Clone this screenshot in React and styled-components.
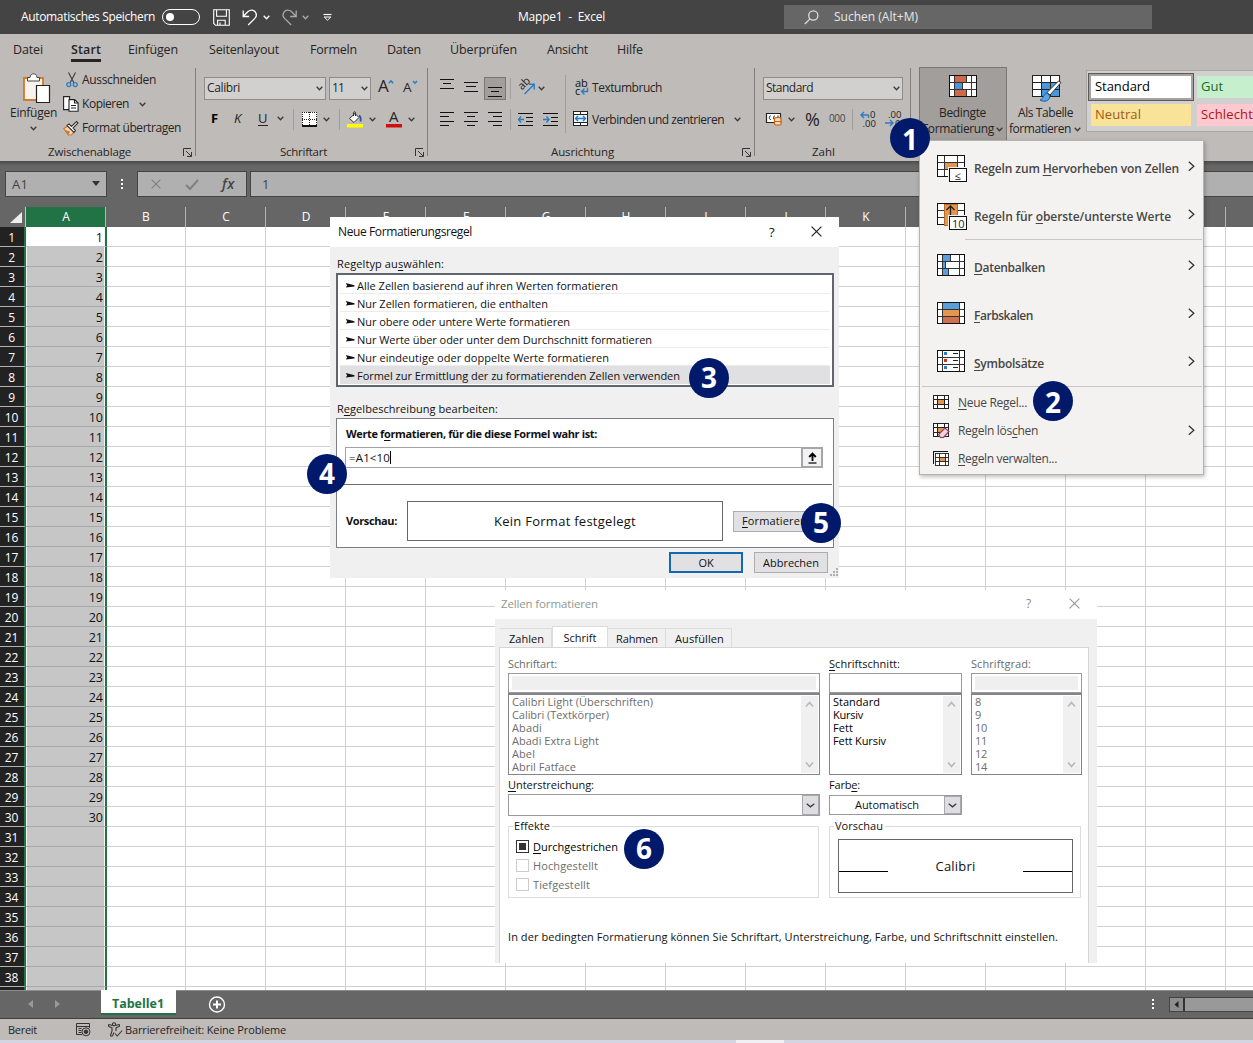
import React, { useLayoutEffect, useRef } from "react";
import styled, { createGlobalStyle } from "styled-components";

const GlobalStyle = createGlobalStyle`
  html, body { margin: 0; padding: 0; overflow: hidden; }
  * { box-sizing: border-box; }
  body { font-family: "Open Sans", "Noto Sans", sans-serif; font-size: 12px; color: #262524; }
  svg { display: block; flex: none; overflow: visible; }
  u { text-decoration: underline; text-underline-offset: 2px; text-decoration-thickness: 1px; }
`;

/* ---------- text that is tracked to a given width ---------- */
const TextBox = styled.span`
  display: block;
  flex: none;
  width: ${(p) => p.$w}px;
  margin-left: ${(p) => p.$ml || 0}px;
  font-size: ${(p) => p.$size || 12}px;
  font-weight: ${(p) => p.$weight || 400};
  font-style: ${(p) => (p.$italic ? "italic" : "normal")};
  color: ${(p) => p.$color || "inherit"};
  line-height: 16px;
  white-space: pre;
`;
function T({ w, ml, size, weight, color, italic, children }) {
  const ref = useRef(null);
  useLayoutEffect(() => {
    const el = ref.current;
    el.style.letterSpacing = "0px";
    const natural = el.getBoundingClientRect().width;
    el.style.letterSpacing = (w - natural) / el.textContent.length + "px";
  }, [w]);
  return (
    <TextBox $w={w} $ml={ml} $size={size} $weight={weight} $color={color} $italic={italic}>
      <span ref={ref}>{children}</span>
    </TextBox>
  );
}

const Slot = styled.div`
  flex: none;
  display: flex;
  align-items: center;
  margin-left: ${(p) => p.$ml || 0}px;
  margin-top: ${(p) => p.$mt || 0}px;
  margin-bottom: ${(p) => p.$mb || 0}px;
  width: ${(p) => p.$w}px;
`;

/* ---------- window ---------- */
const Window = styled.div`
  position: relative;
  width: 1253px;
  height: 1043px;
  overflow: hidden;
  display: flex;
  flex-direction: column;
  background: #fff;
`;
const TitleBar = styled.div`
  flex: none;
  height: 34px;
  background: #444;
  color: #fff;
  display: flex;
  align-items: center;
`;
const Toggle = styled.div`
  margin-left: 7px;
  width: 38px;
  height: 16px;
  border: 1px solid #fff;
  border-radius: 8px;
  display: flex;
  align-items: center;
  padding-left: 3px;
  &::before { content: ""; width: 8px; height: 8px; border-radius: 50%; background: #fff; }
`;
const Search = styled.div`
  margin-left: 179px;
  width: 368px;
  height: 24px;
  background: #666;
  color: #e6e6e6;
  display: flex;
  align-items: center;
  padding-left: 20px;
`;
const Tabs = styled.nav`
  flex: none;
  height: 32px;
  background: #bfbbb8;
  display: flex;
  align-items: flex-start;
  padding-top: 8px;
`;
const Tab = styled.div`
  flex: none;
  margin-left: ${(p) => p.$ml}px;
  padding-bottom: 1px;
  border-bottom: 3px solid ${(p) => (p.$active ? "#262524" : "transparent")};
`;

/* ---------- ribbon ---------- */
const Ribbon = styled.div`
  flex: none;
  height: 95px;
  background: #bfbbb8;
  display: flex;
  overflow: hidden;
`;
const Group = styled.section`
  flex: none;
  width: ${(p) => p.$w}px;
  display: flex;
  flex-direction: column;
`;
const GroupBody = styled.div`
  flex: none;
  height: 71px;
  display: flex;
  padding-top: ${(p) => p.$pt ?? 9}px;
`;
const GroupLabel = styled.div`
  height: 24px;
  padding: 6px 3px 0 0;
  display: flex;
  align-items: center;
  justify-content: space-between;
`;
const GroupLine = styled.div`
  flex: none;
  width: 1px;
  height: 88px;
  margin-top: 2px;
  background: #807d7a;
`;
const Rows = styled.div`
  flex: none;
  width: ${(p) => (p.$w ? `${p.$w}px` : "auto")};
  display: flex;
  flex-direction: column;
`;
const Row = styled.div`
  flex: none;
  height: ${(p) => p.$h}px;
  display: flex;
  align-items: center;
`;
const VLine = styled.div`
  flex: none;
  width: 1px;
  height: ${(p) => p.$h || 21}px;
  margin-left: ${(p) => p.$ml || 0}px;
  background: #a19e9b;
`;
const Combo = styled.div`
  flex: none;
  margin-left: ${(p) => p.$ml}px;
  width: ${(p) => p.$w}px;
  height: 23px;
  border: 1px solid #8f8c8a;
  background: #d2d0ce;
  display: flex;
  align-items: center;
  justify-content: space-between;
  padding: 0 2px;
`;
const Pressed = styled.div`
  flex: none;
  margin-left: 6px;
  width: 22px;
  height: 23px;
  border: 1px solid #797673;
  background: #a19e9b;
  display: flex;
  align-items: center;
  justify-content: center;
  padding-top: 7px;
`;
const PasteButton = styled.div`
  width: 63px;
  padding-top: 5px;
  display: flex;
  flex-direction: column;
`;
const BigButton = styled.div`
  flex: none;
  width: ${(p) => p.$w}px;
  height: 74px;
  margin: 1px 0 0 ${(p) => p.$ml}px;
  border: 1px solid ${(p) => (p.$active ? "#797673" : "transparent")};
  background: ${(p) => (p.$active ? "#a19e9b" : "transparent")};
  display: flex;
  flex-direction: column;
  padding-top: 7px;
`;
const Gallery = styled.div`
  flex: none;
  margin: 4px 0 0 1px;
  width: 180px;
  height: 62px;
  border: 1px solid #a9a6a3;
  background: #d2d0ce;
  display: grid;
  grid-template-columns: 106px 100px;
  grid-template-rows: 28px 22px;
  column-gap: 3px;
  row-gap: 3px;
  padding: 2px 0 0 1px;
`;
const Swatch = styled.div`
  display: flex;
  align-items: center;
  padding: 0 0 2px 4px;
  color: ${(p) => p.$fg};
  background: ${(p) => p.$bg};
  margin: ${(p) => p.$m || "0"};
`;
const SwatchFrame = styled.div`
  border: 1px solid #5b5957;
  background: #a5a2a0;
  padding: 2px;
  display: flex;
  > div { flex: 1; }
`;

/* ---------- formula bar ---------- */
const FormulaBar = styled.div`
  flex: none;
  height: 46px;
  background: linear-gradient(#525252, #666 4px);
  border-top: 1px solid #4d4d4d;
  display: flex;
  align-items: flex-start;
  padding: 9px 0 0 5px;
`;
const FBox = styled.div`
  flex: ${(p) => (p.$w ? "none" : "1")};
  width: ${(p) => p.$w}px;
  height: 26px;
  margin-left: ${(p) => p.$ml || 0}px;
  border: 1px solid #444;
  border-right-width: ${(p) => (p.$w ? 1 : 0)}px;
  background: #b0b0b0;
  color: #444;
  display: flex;
  align-items: center;
`;
const Dots = styled.div`
  flex: none;
  margin: ${(p) => p.$m};
  display: flex;
  flex-direction: column;
  gap: 2px;
  &::before, &::after, > i { content: ""; display: block; width: 2px; height: 2px; background: #fff; }
`;

/* ---------- grid ---------- */
const HeaderRow = styled.div`
  flex: none;
  height: 20px;
  background: #666;
  display: flex;
`;
const Corner = styled.div`
  flex: none;
  width: 26px;
  border-right: 1px solid #c6c6c6;
  padding: 5px 0 0 10px;
`;
const ColHead = styled.div`
  flex: none;
  width: 80px;
  padding-left: 1px;
  border-right: 1px solid #b5b5b5;
  background: ${(p) => (p.$sel ? "#217346" : "transparent")};
  color: #fff;
  text-align: center;
  line-height: 19px;
  font-size: 12px;
`;
const Sheet = styled.div`
  flex: none;
  height: 763px;
  overflow: hidden;
`;
const SheetRow = styled.div`
  height: 20px;
  display: flex;
`;
const RowHead = styled.div`
  flex: none;
  width: 26px;
  padding-right: 1px;
  background: #222;
  color: #fff;
  border-right: 2px solid #217346;
  border-bottom: 1px solid #b0b0b0;
  text-align: center;
  line-height: 21px;
  font-size: 12px;
  letter-spacing: -0.2px;
`;
const CellA = styled.div`
  flex: none;
  width: 81px;
  border-right: 2px solid #217346;
  border-bottom: 1px solid ${(p) => (p.$first ? "#c6c6c6" : "#a9a9a9")};
  background: ${(p) => (p.$first ? "#fff" : "#c6c6c6")};
  box-shadow: inset 1px 0 #f5f5f5, inset -1px 0 #f5f5f5;
  color: #111;
  text-align: right;
  padding-right: 2px;
  line-height: 21px;
  font-size: 12.5px;
`;
const Cell = styled.div`
  flex: none;
  width: ${(p) => (p.$b ? 79 : 80)}px;
  border-right: 1px solid #d0d0d0;
  border-bottom: 1px solid #d0d0d0;
`;

/* ---------- bottom bars ---------- */
const SheetBar = styled.div`
  flex: none;
  height: 29px;
  border-top: 1px solid #8c8c8c;
  border-bottom: 1px solid #3f3f3f;
  background: #666;
  display: flex;
  align-items: flex-start;
`;
const SheetTab = styled.div`
  flex: none;
  margin: -1px 0 0 41px;
  width: 75px;
  height: 25px;
  background: #fff;
  border-bottom: 2px solid #217346;
  padding: 6px 0 0 11px;
`;
const HScroll = styled.div`
  flex: none;
  margin: 6px 0 0 15px;
  width: 90px;
  height: 15px;
  border: 1px solid #444;
  background: #999;
  display: flex;
`;
const HScrollBtn = styled.div`
  width: 15px;
  border-right: 2px solid #333;
  background: #8e8e8e;
  display: flex;
  align-items: center;
  padding-left: 4px;
`;
const StatusBar = styled.div`
  flex: none;
  height: 21px;
  background: #bfbbb8;
  display: flex;
  align-items: center;
  padding-left: 8px;
`;
const Desk = styled.div`
  flex: none;
  height: 3px;
  background: #d3d6e2;
  padding-left: 736px;
  &::before { content: ""; display: block; width: 48px; height: 3px; background: #f1f1f5; }
`;

/* ---------- menu ---------- */
const Menu = styled.div`
  position: absolute;
  left: 919px;
  top: 140px;
  width: 285px;
  height: 335px;
  background: #f3f2f1;
  border: 1px solid #b5b3b1;
  box-shadow: 1px 2px 4px rgba(0, 0, 0, 0.25);
  padding-top: 1px;
  color: #484644;
`;
const BigItem = styled.div`
  height: 48px;
  display: flex;
  align-items: flex-start;
  padding: 13px 8px 0 17px;
`;
const BigItemText = styled.div`
  flex: 1;
  padding: 6px 0 0 7px;
`;
const Sep = styled.div`
  height: 1px;
  margin: ${(p) => p.$m};
  background: #c9c7c5;
`;
const SmallItem = styled.div`
  height: 28px;
  display: flex;
  align-items: center;
  padding: 0 8px 0 13px;
`;
const SmallItemText = styled.div`
  flex: 1;
  padding: 1px 0 0 9px;
`;

/* ---------- dialogs ---------- */
const Dialog = styled.div`
  position: absolute;
  left: ${(p) => p.$x}px;
  top: ${(p) => p.$y}px;
  width: ${(p) => p.$w}px;
  height: ${(p) => p.$h}px;
  background: #f0f0f0;
  color: #111;
  display: flex;
  flex-direction: column;
  overflow: hidden;
`;
const DialogTitle = styled.div`
  flex: none;
  height: ${(p) => p.$h}px;
  padding-bottom: ${(p) => p.$pb || 0}px;
  background: #fff;
  display: flex;
  align-items: center;
  color: ${(p) => p.$color || "#111"};
`;
const Line = styled.div`
  display: flex;
  margin: ${(p) => p.$m || "0"};
`;
const RuleList = styled.div`
  margin: 1px 0 0 6px;
  width: 498px;
  height: 114px;
  border: 2px solid #62656e;
  background: #fff;
  padding: 1px 2px;
`;
const Rule = styled.div`
  height: 18px;
  display: flex;
  align-items: center;
  padding: 2px 0 0 5px;
  border-bottom: 1px solid ${(p) => (p.$sel ? "#e0dfe1" : "#ececec")};
  background: ${(p) => (p.$sel ? "#e0dfe1" : "#fff")};
`;
const Panel = styled.div`
  margin: 1px 0 0 6px;
  width: 498px;
  height: 130px;
  border: 1px solid #7a7d86;
  background: #fff;
  padding-top: 7px;
`;
const FormulaInput = styled.div`
  margin: 5px 0 0 8px;
  width: 478px;
  height: 21px;
  border: 1px solid #a2a2a6;
  display: flex;
  align-items: center;
  padding-left: 3px;
`;
const Caret = styled.i`
  width: 1px;
  height: 13px;
  background: #000;
`;
const PickButton = styled.div`
  margin: 0 -1px 0 auto;
  width: 22px;
  height: 21px;
  border: 2px solid #a6a6aa;
  background: #f2f2f2;
  display: flex;
  align-items: center;
  justify-content: center;
`;
const PanelRule = styled.div`
  margin: 16px 1px 0 0;
  height: 1px;
  background: #6d6f78;
`;
const PreviewRow = styled.div`
  display: flex;
  align-items: center;
  margin-top: 16px;
  height: 40px;
`;
const PreviewBox = styled.div`
  flex: none;
  margin-left: ${(p) => p.$ml}px;
  width: ${(p) => p.$w}px;
  height: 40px;
  border: 1px solid #666;
  display: flex;
  align-items: center;
  justify-content: center;
`;
const Button = styled.div`
  flex: none;
  width: ${(p) => p.$w}px;
  height: 21px;
  margin-left: ${(p) => p.$ml}px;
  border: ${(p) => (p.$primary ? "2px solid #1268b3" : "1px solid #adadad")};
  background: #e1e1e3;
  display: flex;
  align-items: center;
  justify-content: center;
`;
const PageTabs = styled.div`
  flex: none;
  height: 28px;
  display: flex;
  align-items: flex-end;
  padding-left: 5px;
`;
const PageTab = styled.div`
  width: ${(p) => p.$w}px;
  height: ${(p) => (p.$active ? 22 : 19)}px;
  padding-top: 1px;
  padding-left: ${(p) => p.$pl || 0}px;
  margin-bottom: ${(p) => (p.$active ? -1 : 0)}px;
  border: 1px solid #dcdcdc;
  border-bottom: 0;
  border-left-width: ${(p) => (p.$active ? 1 : 0)}px;
  background: ${(p) => (p.$active ? "#fff" : "#f0f0f0")};
  display: flex;
  align-items: center;
  justify-content: center;
`;
const Page = styled.div`
  flex: 1;
  margin: 0 8px 0 4px;
  border: 1px solid #d5d5d5;
  border-bottom: 0;
  background: #fff;
  padding: 8px 0 0 8px;
`;
const Columns = styled.div`
  display: grid;
  grid-template-columns: 312px 133px 111px;
  column-gap: 9px;
`;
const Col = styled.div`
  grid-column: span ${(p) => p.$span || 1};
`;
const Field = styled.div`
  height: 20px;
  margin-top: 1px;
  border: 1px solid #9a9a9e;
  padding: 2px 3px;
  display: flex;
  &::before { content: ""; flex: 1; background: ${(p) => (p.$off ? "#efefef" : "#fff")}; }
`;
const ListBox = styled.div`
  height: 82px;
  border: 1px solid #84858c;
  border-top-width: 2px;
  display: flex;
  padding-left: 3px;
  color: ${(p) => (p.$off ? "#6d6d6d" : "#000")};
`;
const ListItems = styled.div`
  flex: 1;
  display: flex;
  flex-direction: column;
  > span { line-height: 13px; height: 13px; }
`;
const ScrollTrack = styled.div`
  width: 17px;
  margin: 1px 1px 1px 0;
  background: #f0f0f0;
  display: flex;
  flex-direction: column;
  align-items: center;
  justify-content: space-between;
  padding: 5px 0 5px;
`;
const Select = styled.div`
  width: ${(p) => p.$w}px;
  height: ${(p) => p.$h}px;
  margin: ${(p) => p.$m};
  border: 1px solid #9a9a9e;
  display: flex;
  align-items: center;
`;
const SelectBtn = styled.div`
  margin-left: auto;
  width: 17px;
  height: 100%;
  border: 1px solid #a9a9ad;
  background: #dedee0;
  display: flex;
  align-items: center;
  justify-content: center;
`;
const Fieldset = styled.fieldset`
  margin: 0;
  width: ${(p) => p.$w}px;
  height: 79px;
  min-width: 0;
  border: 1px solid #dcdcdc;
  padding: 0 0 0 8px;
`;
const Legend = styled.legend`
  margin-left: -4px;
  padding: 0 2px 0 1px;
  height: 14px;
  > span { line-height: 14px; }
`;
const Checks = styled.div`
  margin: 4px 0 0 -1px;
`;
const Check = styled.div`
  height: 19px;
  display: flex;
  align-items: center;
  color: ${(p) => (p.$on ? "#000" : "#6d6d6d")};
`;
const CheckBox = styled.i`
  flex: none;
  width: 13px;
  height: 13px;
  border: 1px solid ${(p) => (p.$on ? "#333" : "#ccc")};
  background: ${(p) => (p.$on ? "#333" : "#fff")};
  box-shadow: inset 0 0 0 2px #fff;
`;
const FontPreview = styled.div`
  margin: 6px 0 0 0;
  width: 235px;
  height: 54px;
  border: 1px solid #666;
  display: flex;
  align-items: center;
  justify-content: space-between;
  > i { width: 49px; height: 1px; margin-top: 10px; background: #000; }
`;
const Badge = styled.div`
  position: absolute;
  left: ${(p) => p.$x - 20}px;
  top: ${(p) => p.$y - 20}px;
  width: 40px;
  height: 40px;
  padding-top: ${(p) => p.$dy || 0}px;
  border-radius: 50%;
  background: #00196b;
  color: #fff;
  font: 700 28px/39px "Noto Sans", "Open Sans", sans-serif;
  text-align: center;
`;

/* ---------- icons ---------- */
const Svg = ({ w, h, children, ...r }) => (
  <svg width={w} height={h} viewBox={`0 0 ${w} ${h}`} fill="none" {...r}>{children}</svg>
);
const Chev = ({ c = "#3b3a39", w = 7 }) => (
  <Svg w={w} h={5} stroke={c} strokeWidth="1.3"><path d={`M.7.8 ${w / 2} 3.8 ${w - 0.7}.8`} /></Svg>
);
const ChevR = () => (
  <Svg w={7} h={11} stroke="#333" strokeWidth="1.3"><path d="M.8.8 5.8 5.3.8 9.8" /></Svg>
);
const ScrollArrow = ({ up }) => (
  <Svg w={9} h={7} stroke="#b8b8b8" strokeWidth="1.6"><path d={up ? "M1 5.5 4.5 1.5 8 5.5" : "M1 1.5 4.5 5.5 8 1.5"} /></Svg>
);
const Cross = ({ c = "#222", s = 11 }) => (
  <Svg w={s} h={s} stroke={c} strokeWidth="1.2"><path d={`M.6.6 ${s - 0.6} ${s - 0.6}M${s - 0.6}.6.6 ${s - 0.6}`} /></Svg>
);
const SaveIcon = () => (
  <Svg w={17} h={17} stroke="#fff" strokeWidth="1.1">
    <path d="M.7.7h15.6v15.6H2.6L.7 14.4z M3.6.7v6.6h9.8V.7 M4.6 16.2v-5h7.6v5 M7 16v-2.4" />
  </Svg>
);
const UndoIcon = () => (
  <Svg w={16} h={17} stroke="#fff" strokeWidth="1.3">
    <path d="M1.2 1.500v6h6M1.400 7.300 6 2.600C8.500.500 11.500.700 13.200 2.800c1.600 2.200 1.300 4.800-.4 6.600L6.200 16" />
  </Svg>
);
const RedoIcon = () => (
  <Svg w={16} h={17} stroke="#aaa" strokeWidth="1.3">
    <path d="M14.200 1.500v6h-6M14 7.300 9.400 2.600C6.900.500 3.900.700 2.200 2.800.600 5 .900 7.600 2.600 9.400L9.200 16" />
  </Svg>
);
const MoreIcon = () => (
  <Svg w={9} h={8}><path d="M.5 1.5h8" stroke="#fff" strokeWidth="1.2" /><path d="M1.2 4h6.600L4.500 7.200z" fill="#444" stroke="#fff" /></Svg>
);
const SearchIcon = () => (
  <Svg w={15} h={15} stroke="#ddd" strokeWidth="1.3"><circle cx="9.300" cy="5.500" r="4.600" /><path d="M6 8.900.800 14" /></Svg>
);
const PasteIcon = () => (
  <Svg w={29} h={31}>
    <path d="M2 5h19v22H2z" fill="#f7f3ef" stroke="#d07a2b" strokeWidth="1.800" />
    <path d="M5.500 8V4.500H8C8.500 1.500 10 .8 11.500.8s3 .700 3.500 3.700h2.500V8z" fill="#fff" stroke="#444" />
    <path d="M14.500 12.500h13v17h-13z" fill="#fff" stroke="#222" strokeWidth="1.200" />
  </Svg>
);
const CutIcon = () => (
  <Svg w={12} h={16}>
    <path d="M2.500.5 8 11M9.500.5 4 11" stroke="#444" strokeWidth="1.200" />
    <circle cx="2.800" cy="12.600" r="2" stroke="#2b7cc4" strokeWidth="1.300" /><circle cx="9.200" cy="12.600" r="2" stroke="#2b7cc4" strokeWidth="1.300" />
  </Svg>
);
const CopyIcon = () => (
  <Svg w={16} h={16} stroke="#222" strokeWidth="1.1">
    <path d="M.6.6h6v13h-6z" fill="#fff" />
    <path d="M6 3.600h5.600l3.500 3.400v8.300H6z" fill="#fff" /><path d="M11.500 3.600V7H15M8 9.500h5M8 12h5" />
  </Svg>
);
const PainterIcon = () => (
  <Svg w={16} h={15}>
    <path d="M.8 7.500 5.500 14.200l3-.4L11 11 5 5z" fill="#f3d8bd" stroke="#d07a2b" strokeWidth="1.200" />
    <path d="M1 8.500 5.500 14l1.500-3.500z" fill="#d07a2b" />
    <path d="M4 4.500 11 11.500 12.500 9.500 10 7 15 2 13.500.6 8.500 5.500 6 3z" fill="#fff" stroke="#333" strokeWidth="1.100" />
  </Svg>
);
const LauncherIcon = () => (
  <Svg w={9} h={9} stroke="#333"><path d="M.5 8V.5H8M3 3l5 5M8.500 4v4.500H4" /></Svg>
);
const GrowA = ({ down }) => (
  <Svg w={17} h={20}>
    <text x="0" y={14} fontSize={down ? 13.5 : 17} fontFamily="Open Sans" fill="#262524">A</text>
    <path d={down ? "M10 3 12 5.200 14 3" : "M10.800 5.200 13 2.800 15.200 5.200"} stroke="#2b7cc4" strokeWidth="1.500" />
  </Svg>
);
const BorderIcon = () => (
  <Svg w={17} h={17} shapeRendering="crispEdges">
    <path d="M1 1h15v14H1z" fill="#fff" />
    <path d="M1.500 1v14M8.500 1v14M15.500 1v14M1 1.500h15M1 8.500h15" stroke="#222" strokeDasharray="1 1" />
    <path d="M1 15h15" stroke="#111" strokeWidth="2" />
  </Svg>
);
const FillIcon = () => (
  <Svg w={16} h={17}>
    <path d="M0 13h16v3.500H0z" fill="#ff0" /><path d="M2.500 7.500 8 2.500l4 4-5 5z" fill="#fff" stroke="#333" />
    <path d="M6.500 5V1.500c0-1 2-1 2 0V5" stroke="#333" /><path d="M12 4.500c2 1 2 3 1.500 6" stroke="#27529c" strokeWidth="1.800" />
  </Svg>
);
const FontColorIcon = () => (
  <Svg w={16} h={18}>
    <text x="3" y="12" fontSize="15" fontFamily="Open Sans" fill="#262524">A</text><path d="M0 14h16v3.500H0z" fill="#d01010" />
  </Svg>
);
/* text-alignment bars, 4 or 5 px apart */
const Bars = ({ l }) => (
  <Svg w={14} h={Math.round((l.length - 1) * 4.4) + 1} shapeRendering="crispEdges">
    {l.map(([a, b], i) => <path key={i} d={`M${a} ${Math.round(i * 4.4) + 0.5}H${b}`} stroke="#111" />)}
  </Svg>
);
const RotateIcon = () => (
  <Svg w={18} h={18}>
    <text x="0" y="0" transform="translate(4 12.500) rotate(-45)" fontSize="11" fontFamily="Open Sans" fill="#222">ab</text>
    <path d="M6.500 16 15.500 7M11 6.200h5.200v5.200" stroke="#2b7cc4" strokeWidth="1.400" />
  </Svg>
);
const Indent = ({ out }) => (
  <Svg w={15} h={13} shapeRendering="crispEdges">
    <path d="M0 .5h15M8 4.500h7M8 8.500h7M0 12.500h15" stroke="#111" />
    <path d={out ? "M0 6.500h6M3 3.500 .5 6.500 3 9.500" : "M0 6.500h6M3.500 3.500 6 6.500 3.500 9.500"} stroke="#2b7cc4" strokeWidth="1.400" shapeRendering="auto" />
  </Svg>
);
const WrapIcon = () => (
  <Svg w={16} h={18}>
    <text x="1" y="8" fontSize="11" fontFamily="Open Sans" fill="#111">ab</text>
    <text x="1" y="16" fontSize="11" fontFamily="Open Sans" fill="#111">c</text>
    <path d="M13.500 8.500v4H8M10.500 9.500 7.500 12.500l3 3" stroke="#2b7cc4" strokeWidth="1.400" />
  </Svg>
);
const MergeIcon = () => (
  <Svg w={16} h={16}>
    <path d="M.5.5h14v14H.5zM.5 3.500h14M.5 11.500h14M7.500.5v3M7.500 11.500v3" stroke="#222" fill="#fff" shapeRendering="crispEdges" />
    <path d="M1 4h13v7H1z" fill="#e9f3fc" /><path d="M2.500 7.500h10M5 5 2.500 7.500 5 10M10 5l2.500 2.500L10 10" stroke="#2b7cc4" strokeWidth="1.400" />
  </Svg>
);
const CurrencyIcon = () => (
  <Svg w={16} h={14}>
    <path d="M.5 1.500h14v9H.5z" fill="#fff" stroke="#222" strokeWidth="1.200" />
    <path d="M5 4c-2-1-2.500 4 0 3.500M9 4c-2-.500-2 3.500-.5 3.500M12 3.500v2" stroke="#222" />
    <path d="M8.500 6.500c0-1.500 6.500-1.500 6.500 0v5.500c0 1.500-6.500 1.500-6.500 0z" fill="#f7d9b8" stroke="#c8641b" strokeWidth="1.200" /><path d="M8.500 9.500h6.500" stroke="#c8641b" />
  </Svg>
);
const DecimalIcon = ({ more }) => (
  <Svg w={16} h={17}>
    <text x={more ? 10 : 3} y="7" fontSize="9.500" fontFamily="Open Sans" fill="#222">{more ? "0" : ".00"}</text>
    <text x={more ? 2.500 : 10} y="15.500" fontSize="9.500" fontFamily="Open Sans" fill="#222">{more ? ".00" : "0"}</text>
    <path d={more ? "M1 4h7.500M4 1 1 4l3 3M8.500 4v3" : "M0 12h8M5 9 8 12l-3 3"} stroke="#2b7cc4" strokeWidth="1.400" />
  </Svg>
);

/* 28x22 table outline shared by the conditional-formatting icons */
const TableIcon = ({ h = 27, fills, cols = "M5.500 0v22M22.500 0v22", rows = "M0 7.500h28M0 14.500h28", children }) => (
  <Svg w={30} h={h} shapeRendering="crispEdges">
    <path d="M0 0h28v22H0z" fill="#fff" />
    {fills}
    <path d={rows + cols} stroke="#333" />
    <path d="M.5.5h27v21H.5z" stroke="#111" />
    {children}
  </Svg>
);
const Tag = ({ t, x }) => (
  <>
    <path d="M11 12h19v15H11z" fill="#f3f2f1" /><path d="M12.500 13.500h17v13h-17z" fill="#fff" stroke="#111" />
    <text x={x} y="24.500" fontSize="11" fontFamily="Open Sans" fill="#222">{t}</text>
  </>
);
const CondIcon = () => (
  <TableIcon h={24} cols="M5.500 0v22M17.500 0v7M13.500 7v8M17.500 15v7M22.500 0v22" fills={
    <><path d="M5 0h13v7H5z M5 15h13v7H5z" fill="#d0694a" /><path d="M5 8h9v7H5z" fill="#4a98dc" /></>} />
);
const HighlightIcon = () => (
  <TableIcon cols="M7.500 0v22M20.500 0v22" fills={<path d="M7 8h14v7H7z" fill="#e39650" />}><Tag t="≤" x="17.500" /></TableIcon>
);
const TopIcon = () => (
  <TableIcon cols="M7.500 0v22M20.500 0v22" fills={null}>
    <path d="M7.500 1h13v21h-13z" fill="#e39650" stroke="#b86a28" />
    <path d="M13.500 12V3M9.500 7 13.500 3l4 4" stroke="#222" strokeWidth="1.300" shapeRendering="auto" /><Tag t="10" x="15" />
  </TableIcon>
);
const BarsIcon = () => (
  <TableIcon h={22} cols="M5.500 0v22M22.500 0v22M13.500 0v7M8.500 7v8M11.500 15v7" fills={
    <path d="M5 0h9v8H9v7h3v7H5z" fill="#5a9fdc" />} />
);
const ScaleIcon = () => (
  <TableIcon h={22} fills={<><path d="M5 0h18v8H5z" fill="#5a9fdc" /><path d="M5 8h18v7H5z" fill="#e39650" /><path d="M5 15h18v7H5z" fill="#cf7050" /></>} />
);
const SetsIcon = () => (
  <TableIcon h={22} fills={null}>
    <path d="M7 2h3v3H7z M7 16h3v3H7z" fill="#2b7cc4" /><path d="M7 9h3v3H7z" fill="#d03020" />
    <path d="M16 3.500h5M16 10.500h5M16 17.500h5" stroke="#222" />
  </TableIcon>
);
const SmallTable = ({ kind }) => (
  <Svg w={16} h={15} shapeRendering="crispEdges">
    {kind === "manage" && <path d="M.5 13V.5H15" stroke="#111" />}
    <g transform={kind === "manage" ? "translate(2 2) scale(.9)" : ""}>
      <path d="M.5.5h15v13H.5z" fill="#fff" /><path d="M4 4h8v6H4z" fill="#e39650" />
      <path d="M.5.5h15v13H.5zM4.500 0v14M11.500 0v14M0 4.500h16M0 9.500h16" stroke="#222" />
    </g>
    {kind === "clear" && <path d="M5.500 11.500 12 5l4 3.500-5.500 6h-3z" fill="#f0d3dc" stroke="#8a4060" strokeWidth="1.200" shapeRendering="auto" />}
  </Svg>
);
const AsTableIcon = () => (
  <Svg w={31} h={28}>
    <g shapeRendering="crispEdges">
      <path d="M0 0h28v22H0z" fill="#fff" /><path d="M10 7h18v15H10z" fill="#4a98dc" />
      <path d="M.5.5h27v21H.5zM9.500 0v22M18.500 0v22M0 7.500h28M0 14.500h28" stroke="#222" />
    </g>
    <path d="M29 7.500 18 20l-3-2.500L26.500 6z" fill="#fff" stroke="#333" />
    <path d="M15.500 18.500c-4-.5-3.500 5-7.500 6.500 4 2.500 10 1 9.800-3.800z" fill="#5aa5e6" stroke="#1f5f9f" />
  </Svg>
);
const RuleArrow = () => (
  <Svg w={10} h={5}><path d="M.8 0 9.500 2.200V3.400L.8 4.400 2.200 2.600z" fill="#111" /></Svg>
);
const PickIcon = () => (
  <Svg w={11} h={12}><path d="M5.500 9V2M2.200 5 5.500 1.600 8.800 5" stroke="#000" strokeWidth="1.900" /><path d="M1.500 11h8" stroke="#000" strokeWidth="1.200" /></Svg>
);
const GripIcon = () => (
  <Svg w={9} h={9} shapeRendering="crispEdges"><path fill="#b0b0b0" d="M6 0h2v2H6zM6 3h2v2H6zM3 3h2v2H3zM6 6h2v2H6zM3 6h2v2H3zM0 6h2v2H0z" /></Svg>
);
const MacroIcon = () => (
  <Svg w={15} h={14} stroke="#333"><path d="M6 11.500H.5V.5h13V5M.5 3.500h13M2.500 5.500h3M2.500 7.500h3M2.500 9.500h3" /><circle cx="10" cy="8.800" r="4" fill="#bfbbb8" /><circle cx="10" cy="8.800" r="1.800" fill="#333" /></Svg>
);
const AccessIcon = () => (
  <Svg w={15} h={15} stroke="#333" strokeWidth="1.1">
    <circle cx="6" cy="2.300" r="1.600" /><path d="M4.500 3.500 1 2.500C0 3.500.500 4.500 1.500 4.800L4 5.800V9l-1.500 4.500c.5 1 1.500 1 2 .3L6 10.500M7.500 3.500 11 2.500c1 1 .500 2-.500 2.300L8 5.800V9M7 11.500l2.200 2.500 5-5.500" />
  </Svg>
);

/* ---------- data ---------- */
const TABS = [["Datei", 13, 30], ["Start", 28, 30, true], ["Einfügen", 27, 50], ["Seitenlayout", 31, 70], ["Formeln", 31, 47], ["Daten", 30, 34], ["Überprüfen", 29, 67], ["Ansicht", 30, 41], ["Hilfe", 29, 26]];
const COLS = "ABCDEFGHIJKLMNOP".split("");
const RULES = [["Alle Zellen basierend auf ihren Werten formatieren", 261], ["Nur Zellen formatieren, die enthalten", 191], ["Nur obere oder untere Werte formatieren", 213], ["Nur Werte über oder unter dem Durchschnitt formatieren", 295], ["Nur eindeutige oder doppelte Werte formatieren", 252], ["Formel zur Ermittlung der zu formatierenden Zellen verwenden", 323]];
const FONTS = [["Calibri Light (Überschriften)", 141], ["Calibri (Textkörper)", 97], ["Abadi", 30], ["Abadi Extra Light", 87], ["Abel", 23], ["Abril Fatface", 64]];
const STYLES = [["Standard", 47], ["Kursiv", 30], ["Fett", 20], ["Fett Kursiv", 53]];
const SIZES = [["8", 6], ["9", 6], ["10", 12], ["11", 12], ["12", 12], ["14", 12]];
const BADGES = [[910, 138, 2], [1053, 401, 2], [709, 378], [327, 474], [821, 523], [644, 849]];

const List = ({ items, off }) => (
  <ListBox $off={off}>
    <ListItems>{items.map(([t, w]) => <T key={t} w={w} size={11}>{t}</T>)}</ListItems>
    <ScrollTrack><ScrollArrow up /><ScrollArrow /></ScrollTrack>
  </ListBox>
);

function RibbonArea() {
  return (
    <Ribbon>
      <Group $w={195}>
        <GroupBody $pt={2}>
          <PasteButton>
            <Slot $ml={22} $w={29}><PasteIcon /></Slot>
            <Slot $w={63} $mt={1}><T ml={10} w={47}>Einfügen</T></Slot>
            <Slot $ml={30} $w={7}><Row $h={14}><Chev /></Row></Slot>
          </PasteButton>
          <Rows>
            <Row $h={24}><Slot $ml={3} $w={12}><CutIcon /></Slot><T ml={4} w={74}>Ausschneiden</T></Row>
            <Row $h={24}><CopyIcon /><T ml={3} w={47}>Kopieren</T><Slot $ml={10} $w={7}><Chev /></Slot></Row>
            <Row $h={24}><PainterIcon /><T ml={3} w={99}>Format übertragen</T></Row>
          </Rows>
        </GroupBody>
        <GroupLabel><T ml={48} w={83} size={11.5}>Zwischenablage</T><LauncherIcon /></GroupLabel>
      </Group>
      <GroupLine />
      <Group $w={231}>
        <GroupBody>
          <Rows>
            <Row $h={26}>
              <Combo $ml={8} $w={122}><T w={33}>Calibri</T><Chev /></Combo>
              <Combo $ml={3} $w={42}><T w={12}>11</T><Chev /></Combo>
              <Slot $ml={7} $w={17}><GrowA /></Slot>
              <Slot $ml={8} $w={17}><GrowA down /></Slot>
            </Row>
            <Row $h={36}>
              <Slot $mb={2} $w={97}>
                <T ml={15} w={8} size={13} weight={700} color="#000">F</T>
                <T ml={15} w={10} size={13} italic>K</T>
                <T ml={14} w={10} size={13}><u>U</u></T>
                <Slot $ml={9} $w={7}><Chev /></Slot>
              </Slot>
              <VLine />
              <Slot $ml={7} $w={17}><BorderIcon /></Slot>
              <Slot $ml={5} $w={7}><Chev /></Slot>
              <VLine $ml={9} />
              <Slot $ml={7} $w={16}><FillIcon /></Slot>
              <Slot $ml={6} $w={7}><Chev /></Slot>
              <Slot $ml={10} $w={16}><FontColorIcon /></Slot>
              <Slot $ml={6} $w={7}><Chev /></Slot>
            </Row>
          </Rows>
        </GroupBody>
        <GroupLabel><T ml={84} w={47} size={11.5}>Schriftart</T><LauncherIcon /></GroupLabel>
      </Group>
      <GroupLine />
      <Group $w={326}>
        <GroupBody>
          <Rows $w={137}>
            <Row $h={26}>
              <Slot $ml={12} $w={14} $mb={8}><Bars l={[[0, 14], [3, 11], [0, 14]]} /></Slot>
              <Slot $ml={10} $w={14} $mb={2}><Bars l={[[0, 14], [2, 12], [0, 14]]} /></Slot>
              <Pressed><Bars l={[[0, 14], [3, 11], [0, 14]]} /></Pressed>
              <VLine $ml={4} />
              <Slot $ml={7} $w={18} $mb={2}><RotateIcon /></Slot>
              <Slot $ml={2} $w={7}><Chev /></Slot>
            </Row>
            <Row $h={36}>
              <Slot $ml={12} $w={14}><Bars l={[[0, 14], [0, 9], [0, 14], [0, 9]]} /></Slot>
              <Slot $ml={10} $w={14}><Bars l={[[0, 14], [3, 11], [0, 14], [3, 11]]} /></Slot>
              <Slot $ml={10} $w={14}><Bars l={[[0, 14], [5, 14], [0, 14], [5, 14]]} /></Slot>
              <VLine $ml={8} />
              <Slot $ml={7} $w={15}><Indent out /></Slot>
              <Slot $ml={10} $w={15}><Indent /></Slot>
            </Row>
          </Rows>
          <VLine $h={58} />
          <Rows>
            <Row $h={26}><Slot $ml={8} $w={16}><WrapIcon /></Slot><T ml={2} w={70}>Textumbruch</T></Row>
            <Row $h={36}>
              <Slot $ml={7} $w={16}><MergeIcon /></Slot>
              <Slot $mt={2} $w={135}><T ml={3} w={132}>Verbinden und zentrieren</T></Slot>
              <Slot $ml={10} $w={7}><Chev /></Slot>
            </Row>
          </Rows>
        </GroupBody>
        <GroupLabel><T ml={123} w={63} size={11.5}>Ausrichtung</T><LauncherIcon /></GroupLabel>
      </Group>
      <GroupLine />
      <Group $w={155}>
        <GroupBody>
          <Rows>
            <Row $h={26}><Combo $ml={8} $w={140}><T w={47}>Standard</T><Chev /></Combo></Row>
            <Row $h={36}>
              <Slot $ml={11} $w={16}><CurrencyIcon /></Slot>
              <Slot $ml={6} $w={7}><Chev /></Slot>
              <T ml={10} w={16} size={18}>%</T>
              <Slot $ml={8} $w={16} $mb={2}><T w={16} size={10} color="#444">000</T></Slot>
              <VLine $ml={7} />
              <Slot $ml={7} $w={16}><DecimalIcon more /></Slot>
              <Slot $ml={9} $w={16}><DecimalIcon /></Slot>
            </Row>
          </Rows>
        </GroupBody>
        <GroupLabel><T ml={57} w={23} size={11.5}>Zahl</T></GroupLabel>
      </Group>
      <GroupLine />
      <BigButton $w={88} $ml={8} $active>
        <Slot $ml={29} $w={30}><CondIcon /></Slot>
        <Slot $w={86}><Row $h={28}><T ml={19} w={47}>Bedingte</T></Row></Slot>
        <Slot $w={86}><Row $h={4}><T ml={2} w={72}>Formatierung</T><Slot $ml={2} $w={7}><Chev /></Slot></Row></Slot>
      </BigButton>
      <BigButton $w={76} $ml={2}>
        <Slot $ml={22} $w={31}><Row $h={24}><Slot $mt={4} $w={31}><AsTableIcon /></Slot></Row></Slot>
        <Slot $w={74}><Row $h={28}><T ml={8} w={55}>Als Tabelle</T></Row></Slot>
        <Slot $w={74}><Row $h={4}><T ml={-1} w={62}>formatieren</T><Slot $ml={3} $w={7}><Chev /></Slot></Row></Slot>
      </BigButton>
      <Gallery>
        <SwatchFrame><Swatch $bg="#fff" $fg="#000"><T w={55} size={13}>Standard</T></Swatch></SwatchFrame>
        <Swatch $bg="#c6efce" $fg="#1b6b2a" $m="3px 0"><T w={22} size={13}>Gut</T></Swatch>
        <Swatch $bg="#f8e399" $fg="#a05a14" $m="0 3px"><T w={46} size={13}>Neutral</T></Swatch>
        <Swatch $bg="#ffc7ce" $fg="#a5161d"><T w={52} size={13}>Schlecht</T></Swatch>
      </Gallery>
    </Ribbon>
  );
}

const BigEntry = ({ icon, w, children }) => (
  <BigItem>
    {icon}
    <BigItemText><T w={w} weight={600}>{children}</T></BigItemText>
    <Slot $mt={6} $w={7}><ChevR /></Slot>
  </BigItem>
);

function CondMenu() {
  return (
    <Menu>
      <BigEntry icon={<HighlightIcon />} w={205}>Regeln zum <u>H</u>ervorheben von Zellen</BigEntry>
      <BigEntry icon={<TopIcon />} w={197}>Regeln für <u>o</u>berste/unterste Werte</BigEntry>
      <Sep $m="1px 1px 1px 45px" />
      <BigEntry icon={<BarsIcon />} w={71}><u>D</u>atenbalken</BigEntry>
      <BigEntry icon={<ScaleIcon />} w={59}><u>F</u>arbskalen</BigEntry>
      <BigEntry icon={<SetsIcon />} w={70}><u>S</u>ymbolsätze</BigEntry>
      <Sep $m="1px 1px 1px 2px" />
      <SmallItem><SmallTable /><SmallItemText><T w={69}><u>N</u>eue Regel...</T></SmallItemText></SmallItem>
      <SmallItem><SmallTable kind="clear" /><SmallItemText><T w={80}>Regeln lös<u>c</u>hen</T></SmallItemText><ChevR /></SmallItem>
      <SmallItem><SmallTable kind="manage" /><SmallItemText><T w={99}><u>R</u>egeln verwalten...</T></SmallItemText></SmallItem>
    </Menu>
  );
}

function RuleDialog() {
  return (
    <Dialog $x={330} $y={217} $w={509} $h={361}>
      <DialogTitle $h={30}>
        <T ml={8} w={134}>Neue Formatierungsregel</T>
        <T ml={297} w={6} size={13}>?</T>
        <Slot $ml={36} $mb={2} $w={11}><Cross /></Slot>
      </DialogTitle>
      <Line $m="9px 0 0 7px"><T w={107} size={11}>Regeltyp au<u>s</u>wählen:</T></Line>
      <RuleList>
        {RULES.map(([t, w], i) => <Rule key={t} $sel={i === 5}><RuleArrow /><T ml={2} w={w} size={11}>{t}</T></Rule>)}
      </RuleList>
      <Line $m="14px 0 0 7px"><T w={161} size={11}>R<u>e</u>gelbeschreibung bearbeiten:</T></Line>
      <Panel>
        <Line $m="0 0 0 9px"><T w={251} size={11} weight={700}>Werte f<u>o</u>rmatieren, für die diese Formel wahr ist:</T></Line>
        <FormulaInput><T w={41} size={11.5}>{"=A1<10"}</T><Caret /><PickButton><PickIcon /></PickButton></FormulaInput>
        <PanelRule />
        <PreviewRow>
          <T ml={9} w={51} size={11} weight={700}>Vorschau:</T>
          <PreviewBox $ml={10} $w={316}><T w={142} size={13}>Kein Format festgelegt</T></PreviewBox>
          <Button $ml={10} $w={92}><T w={74} size={11}><u>F</u>ormatieren...</T></Button>
        </PreviewRow>
      </Panel>
      <Line $m="4px 0 0 339px">
        <Button $w={74} $ml={0} $primary><T w={15} size={11}>OK</T></Button>
        <Button $w={74} $ml={11}><T w={56} size={11}>Abbrechen</T></Button>
      </Line>
      <Line $m="-5px 0 0 500px"><GripIcon /></Line>
    </Dialog>
  );
}

function CellDialog() {
  return (
    <Dialog $x={495} $y={590} $w={602} $h={373}>
      <DialogTitle $h={29} $pb={2} $color="#8c9a8f">
        <T ml={6} w={97} size={11.5}>Zellen formatieren</T>
        <T ml={428} w={6} size={12} color="#888">?</T>
        <Slot $ml={37} $w={11}><Cross c="#999" /></Slot>
      </DialogTitle>
      <PageTabs>
        <PageTab $w={52} $pl={2}><T w={35} size={11}>Zahlen</T></PageTab>
        <PageTab $w={56} $active><T w={33} size={11}>Schrift</T></PageTab>
        <PageTab $w={58} $pl={1}><T w={42} size={11}>Rahmen</T></PageTab>
        <PageTab $w={66} $pl={2}><T w={49} size={11}>Ausfüllen</T></PageTab>
      </PageTabs>
      <Page>
        <Columns>
          <Col><T w={49} size={11} color="#6d6d6d">Schriftart:</T><Field $off /><List items={FONTS} off /></Col>
          <Col><T w={71} size={11}><u>S</u>chriftschnitt:</T><Field /><List items={STYLES} /></Col>
          <Col><T w={60} size={11} color="#6d6d6d">Schriftgrad:</T><Field $off /><List items={SIZES} off /></Col>
          <Col>
            <Line $m="2px 0 0 0"><T w={86} size={11}><u>U</u>nterstreichung:</T></Line>
            <Select $w={312} $h={22} $m="1px 0 3px"><SelectBtn><Chev w={9} /></SelectBtn></Select>
            <Fieldset $w={311}>
              <Legend><T w={36} size={11}>Effekte</T></Legend>
              <Checks>
                <Check $on><CheckBox $on /><T ml={4} w={85} size={11}><u>D</u>urchgestrichen</T></Check>
                <Check><CheckBox /><T ml={4} w={65} size={11}>Hochgestellt</T></Check>
                <Check><CheckBox /><T ml={4} w={57} size={11}>Tiefgestellt</T></Check>
              </Checks>
            </Fieldset>
          </Col>
          <Col $span={2}>
            <Line $m="2px 0 0 0"><T w={31} size={11}>Farb<u>e</u>:</T></Line>
            <Select $w={133} $h={20} $m="2px 0 4px"><T ml={25} w={64} size={11}>Automatisch</T><SelectBtn><Chev w={9} /></SelectBtn></Select>
            <Fieldset $w={252}>
              <Legend><T w={48} size={11}>Vorschau</T></Legend>
              <FontPreview><i /><T w={40} size={13}>Calibri</T><i /></FontPreview>
            </Fieldset>
          </Col>
        </Columns>
        <Line $m="31px 0 0 0"><T w={550} size={11}>In der bedingten Formatierung können Sie Schriftart, Unterstreichung, Farbe, und Schriftschnitt einstellen.</T></Line>
      </Page>
    </Dialog>
  );
}

export default function App() {
  return (
    <>
      <GlobalStyle />
      <Window>
        <TitleBar>
          <T ml={21} w={134}>Automatisches Speichern</T>
          <Toggle />
          <Slot $ml={13} $w={17}><SaveIcon /></Slot>
          <Slot $ml={12} $w={16}><UndoIcon /></Slot>
          <Slot $ml={5} $w={7}><Chev c="#fff" /></Slot>
          <Slot $ml={12} $w={16}><RedoIcon /></Slot>
          <Slot $ml={4} $w={7}><Chev c="#aaa" /></Slot>
          <Slot $ml={14} $w={9}><MoreIcon /></Slot>
          <T ml={186} w={87}>Mappe1  -  Excel</T>
          <Search><SearchIcon /><T ml={15} w={84}>Suchen (Alt+M)</T></Search>
        </TitleBar>
        <Tabs>
          {TABS.map(([t, ml, w, a]) => <Tab key={t} $ml={ml} $active={a}><T w={w} size={12.5} weight={a ? 600 : 400}>{t}</T></Tab>)}
        </Tabs>
        <RibbonArea />
        <FormulaBar>
          <FBox $w={102}><T ml={6} w={16} size={13}>A1</T><Slot $ml={64} $mb={2} $w={9}><Svg w={9} h={5}><path d="M0 0h8L4 5z" fill="#333" /></Svg></Slot></FBox>
          <Dots $m="8px 0 0 14px"><i /></Dots>
          <FBox $w={110} $ml={14}>
            <Slot $ml={13} $w={10}><Cross c="#808080" s={10} /></Slot>
            <Slot $ml={24} $w={14}><Svg w={14} h={11} stroke="#808080" strokeWidth="2"><path d="M1 6l4 4L13 1" /></Svg></Slot>
            <T ml={23} w={13} size={14} italic weight={600}>fx</T>
          </FBox>
          <FBox $ml={3}><T ml={11} w={7} size={13}>1</T></FBox>
        </FormulaBar>
        <HeaderRow>
          <Corner><Svg w={12} h={11}><path d="M12 0v11H0z" fill="#eee" /></Svg></Corner>
          {COLS.map((c, i) => <ColHead key={c} $sel={i === 0}>{c}</ColHead>)}
        </HeaderRow>
        <Sheet>
          {Array.from({ length: 39 }, (_, r) => (
            <SheetRow key={r}>
              <RowHead>{r + 1}</RowHead>
              <CellA $first={r === 0}>{r < 30 ? r + 1 : ""}</CellA>
              {COLS.slice(1).map((c, i) => <Cell key={c} $b={i === 0} />)}
            </SheetRow>
          ))}
        </Sheet>
        <SheetBar>
          <Slot $ml={28} $w={5}><Row $h={25}><Svg w={5} h={8}><path d="M5 0v8L0 4z" fill="#999" /></Svg></Row></Slot>
          <Slot $ml={22} $w={5}><Row $h={25}><Svg w={5} h={8}><path d="M0 0v8l5-4z" fill="#999" /></Svg></Row></Slot>
          <SheetTab><T w={52} size={12.5} weight={700} color="#217346">Tabelle1</T></SheetTab>
          <Slot $ml={32} $w={17}><Row $h={26}><Svg w={17} h={17} stroke="#fff"><circle cx="9" cy="8.500" r="7.500" strokeWidth="1.400" /><path d="M9 4.500v8M5 8.500h8" strokeWidth="2" /></Svg></Row></Slot>
          <Dots $m="8px 0 0 927px"><i /></Dots>
          <HScroll><HScrollBtn><Svg w={5} h={7}><path d="M4.500 0v7L.5 3.500z" fill="#222" /></Svg></HScrollBtn></HScroll>
        </SheetBar>
        <StatusBar>
          <T w={29} size={11}>Bereit</T>
          <Slot $ml={39} $w={15}><MacroIcon /></Slot>
          <Slot $ml={17} $w={15}><AccessIcon /></Slot>
          <T ml={2} w={161} size={11}>Barrierefreiheit: Keine Probleme</T>
        </StatusBar>
        <Desk />
        <RuleDialog />
        <CellDialog />
        <CondMenu />
        {BADGES.map(([x, y, dy], i) => <Badge key={i} $x={x} $y={y} $dy={dy}>{i + 1}</Badge>)}
      </Window>
    </>
  );
}
